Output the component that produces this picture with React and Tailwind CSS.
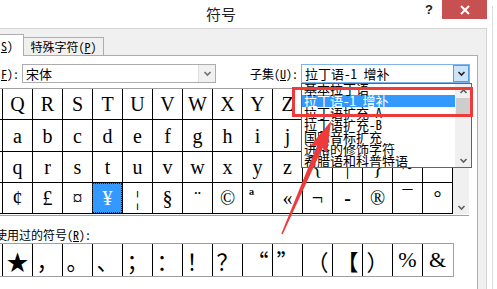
import React from "react";

const ui = { fontFamily: '"Noto Sans Mono CJK SC", "Noto Sans CJK SC", "Noto Sans", sans-serif' };
const cjk = { fontFamily: '"Noto Sans CJK SC", "Noto Sans", sans-serif' };
const serif = { fontFamily: '"Liberation Serif", "Noto Sans CJK SC", serif' };

const rows = [
  ["Q", "R", "S", "T", "U", "V", "W", "X", "Y", "Z", "[", "\\", "]", "^", "_"],
  ["a", "b", "c", "d", "e", "f", "g", "h", "i", "j", "k", "l", "m", "n", "o"],
  ["q", "r", "s", "t", "u", "v", "w", "x", "y", "z", "{", "|", "}", "~", ""],
  ["¢", "£", "¤", "¥", "¦", "§", "¨", "©", "ª", "«", "¬", "-", "®", "¯", "°"],
];
const rowH = ["h-[31px]", "h-[32px]", "h-[31px]", "h-[31px]"];

const recent = ["★", "，", "。", "、", "；", "：", "！", "？", "“", "”", "（", "【", "）", "%", "&"];

const listItems = [
  "基本拉丁语",
  "拉丁语-1 增补",
  "拉丁语扩充-A",
  "拉丁语扩充-B",
  "国际音标扩充",
  "进格的修饰字符",
  "希腊语和科普特语",
];

function Chevron({ dir = "down", color = "#606060", size = 9 }) {
  const d = dir === "down" ? "M1.5 3 L4.5 6 L7.5 3" : "M1.5 6 L4.5 3 L7.5 6";
  return (
    <svg width={size} height={size} viewBox="0 0 9 9">
      <path d={d} fill="none" stroke={color} strokeWidth="1.6" />
    </svg>
  );
}

export default function App() {
  return (
    <div className="relative w-[497px] h-[289px] overflow-hidden bg-white text-black" style={ui}>
      {/* Title bar */}
      <div className="flex h-[28px] w-[497px] items-start bg-white">
        <div className="w-[425px] pl-[206px] pt-[4px] text-[15px] leading-[20px] text-[#222]" style={cjk}>符号</div>
        <div className="w-[17px] pt-[2px] text-[13px] font-bold leading-[16px] text-[#222]" style={{ fontFamily: '"Liberation Sans", sans-serif' }}>?</div>
        <div className="flex h-[19px] w-[45px] items-center justify-center bg-[#c75050]">
          <svg width="10" height="10" viewBox="0 0 10 10">
            <path d="M1 1 L9 9 M9 1 L1 9" stroke="#fff" strokeWidth="2" />
          </svg>
        </div>
        <div className="flex h-[28px] flex-1 bg-white">
          <div className="ml-[5px] mt-[6px] w-[1px] bg-[#dcdcdc]" />
        </div>
      </div>

      {/* Body */}
      <div className="flex h-[261px]">
        <div className="flex w-[487px] flex-col border-r border-t border-[#d4d4d4] bg-[#f0f0f0]">
          {/* Tabs */}
          <div className="flex h-[26px] items-end">
            <div className="relative z-10 -mb-[1px] flex h-[22px] w-[24px] justify-end overflow-hidden border-r border-t border-[#adadad] bg-white text-[12px] leading-[18px]">
              <span className="whitespace-nowrap pr-[10px] pt-[2px]">符号(<u>S</u>)</span>
            </div>
            <div className="flex h-[18px] w-[80px] items-center justify-center border-r border-t border-[#adadad] bg-[#f0f0f0] text-[12px] leading-[16px]">
              <span className="whitespace-nowrap">特殊字符(<u>P</u>)</span>
            </div>
          </div>
          {/* Panel */}
          <div className="flex w-[478px] flex-1 flex-col border-r border-t border-[#adadad] bg-white">
            {/* Font row */}
            <div className="mt-[8px] flex h-[19px] items-center">
              <div className="flex w-[22px] justify-end overflow-hidden text-[12px] leading-[14px]">
                <span className="whitespace-nowrap pr-[3px]">字体(<u>F</u>):</span>
              </div>
              <div className="flex h-[19px] w-[194px] items-center border border-[#acacac] bg-white">
                <span className="flex-1 pl-[3px] text-[13px] leading-[15px]" style={cjk}>宋体</span>
                <div className="flex h-[17px] w-[17px] items-center justify-center border-l border-[#e0e0e0] bg-[#f0f0f0]">
                  <Chevron color="#707070" />
                </div>
              </div>
              <div className="ml-[34px] w-[51px] whitespace-nowrap text-[12px] leading-[14px]">
                子集(<u>U</u>):
              </div>
              <div className="flex h-[19px] w-[169px] items-center border border-[#7eb4ea] bg-white">
                <span className="flex-1 whitespace-nowrap pl-[3px] text-[13px] leading-[15px]">拉丁语-1 增补</span>
                <div className="flex h-[17px] w-[16px] items-center justify-center border border-[#569de5] bg-[#cce4f7]">
                  <Chevron color="#222" />
                </div>
              </div>
            </div>

            {/* Grid */}
            <div className="mt-[5px] flex w-[469px] border-b border-t border-[#a0a0a0] pb-[1px]">
              <div className="flex w-[453px] flex-col">
                {rows.map((r, ri) => (
                  <div key={ri} className={`flex border-b border-black ${rowH[ri]}`} style={serif}>
                    <div className="w-[2px]" />
                    {r.map((c, ci) => {
                      const sel = ri === 3 && ci === 3;
                      const ord = ri === 3 && ci === 8;
                      return (
                        <div
                          key={ci}
                          className={`flex w-[30px] justify-center border-l border-black leading-none ${ord ? "items-start pt-[5px] pr-[12px] text-[17px] font-bold" : "items-center text-[20px]"} ${ci === 14 ? "w-[31px] border-r" : ""} ${sel ? "bg-[#3399ff] text-white outline-1 -outline-offset-1 outline-dotted outline-[#222]" : ""} ${ri === 3 && ci === 11 ? "font-bold" : ""}`}
                        >
                          {c}
                        </div>
                      );
                    })}
                  </div>
                ))}
              </div>
              <div className="flex w-[16px] flex-col items-center justify-end bg-[#f0f0f0] pb-[2px]">
                <Chevron />
              </div>
            </div>

            {/* Recent label */}
            <div className="-ml-[5px] mt-[12px] whitespace-nowrap text-[12px] leading-[14px]">
              使用过的符号(<u>R</u>):
            </div>

            {/* Recent row */}
            <div className="mt-[1px] flex h-[34px] w-[454px] border-b border-r border-t border-[#a0a0a0]">
              <div className="w-[2px]" />
              {recent.map((c, i) => (
                <div
                  key={i}
                  className="flex w-[30px] items-center justify-center border-l border-black text-[22px] leading-none"
                  style={c === "%" || c === "&" ? serif : cjk}
                >
                  {c}
                </div>
              ))}
            </div>
          </div>
        </div>
        <div className="flex flex-1 bg-white">
          <div className="ml-[5px] w-[1px] bg-[#dcdcdc]" />
        </div>
      </div>

      {/* Dropdown list overlay */}
      <div className="absolute left-[301px] top-[83px] flex h-[85px] w-[171px] border border-[#646464] bg-white">
        <div className="flex-1 overflow-hidden">
          {listItems.map((t, i) => (
            <div
              key={i}
              className={`h-[12px] whitespace-nowrap pl-[2px] text-[13px] leading-[12px] ${i === 0 ? "-mt-[1px]" : ""} ${i === 1 ? "bg-[#3399ff] text-white" : ""}`}
            >
              {t}
            </div>
          ))}
        </div>
        <div className="flex w-[16px] flex-col items-center bg-[#f0f0f0]">
          <div className="pt-[3px]"><Chevron dir="up" /></div>
          <div className="mt-[2px] h-[16px] w-[15px] bg-[#cdcdcd]" />
          <div className="flex-1" />
          <div className="pb-[2px]"><Chevron /></div>
        </div>
      </div>

      {/* Red annotation rectangle */}
      <div className="absolute left-[292px] top-[87px] h-[30px] w-[181px] border-[3px] border-[#ef3a3a]" />

      {/* Red arrow */}
      <svg className="absolute left-0 top-0" width="497" height="289" viewBox="0 0 497 289">
        <polygon
          points="281.3,233.7 282.7,234.3 322.5,148.1 326.9,153.3 331,121 310.4,146.1 317.1,145.7"
          fill="#ef3a3a"
        />
      </svg>
    </div>
  );
}
